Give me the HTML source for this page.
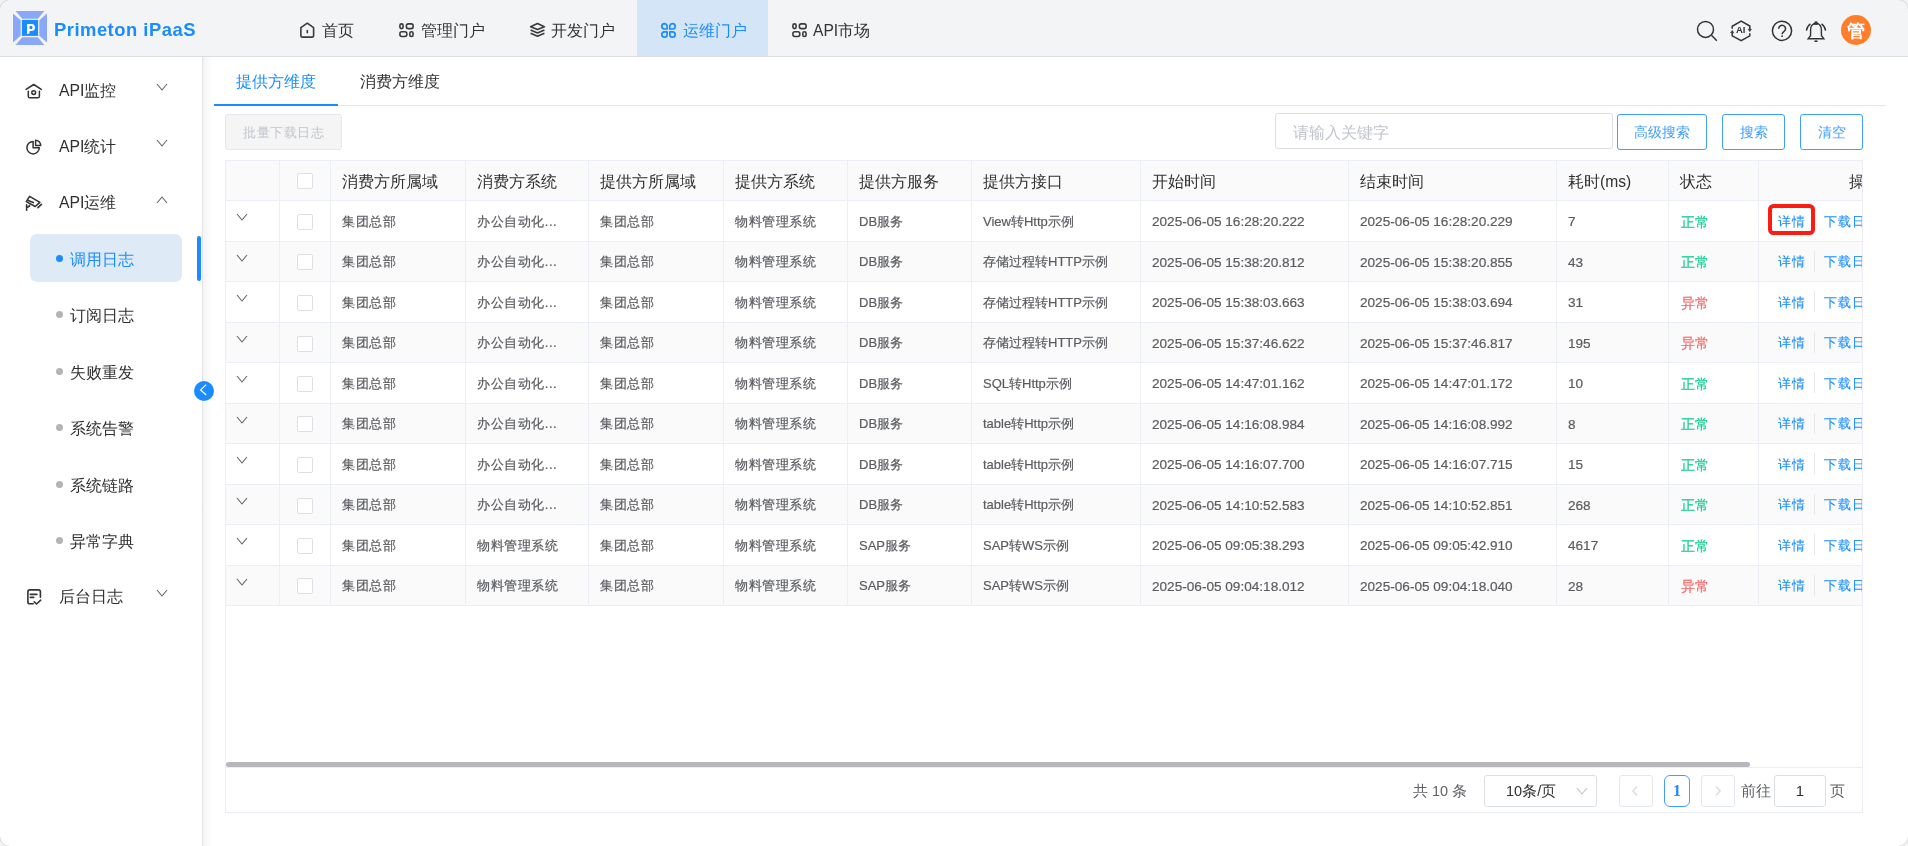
<!DOCTYPE html><html><head><meta charset="utf-8"><style>
*{box-sizing:border-box;margin:0;padding:0}
html,body{width:1908px;height:846px;overflow:hidden;background:#fff;font-family:"Liberation Sans",sans-serif;}
.a{position:absolute;white-space:nowrap}
#hdr{position:absolute;left:0;top:0;width:1908px;height:57px;background:#f3f4f6;border-bottom:1px solid #dcdde0;}
.brand{left:54px;top:17px;font-size:18.4px;font-weight:bold;color:#1a8cff;letter-spacing:0.5px;line-height:26px}
.nv{font-size:15.6px;color:#333;line-height:20px;top:21px}
.ic{position:absolute}
#side{position:absolute;left:0;top:57px;width:203px;height:789px;background:#fff;border-right:1px solid #e3e3e3}
.mt{font-size:15.8px;color:#303133;line-height:20px;margin-top:0.7px}
.st{font-size:15.8px;color:#303133;line-height:20px;margin-top:1.5px}
.dot{position:absolute;width:7px;height:7px;border-radius:50%;background:#b4b4b4}
.cell{font-size:13.6px;color:#5a5c60;line-height:18px;-webkit-text-stroke:0.2px}
.hc{font-size:15.6px;color:#303133;line-height:20px}
.cb{position:absolute;width:16px;height:16px;border:1px solid #dcdfe6;border-radius:2px;background:#fff}
.vl{position:absolute;width:1px;background:#ebeef5}
.hl{position:absolute;height:1px;background:#ebeef5}
.btn{position:absolute;height:36px;border:1px solid #409eff;border-radius:3px;background:#fff;color:#409eff;font-size:13.5px;line-height:36px;text-align:center}
</style></head><body><div id="root" style="position:absolute;left:0;top:0;width:1908px;height:846px;will-change:transform"><div id="hdr">
<svg class="ic" style="left:13px;top:11px" width="34" height="34" viewBox="0 0 34 34">
<defs><clipPath id="lc"><rect x="0" y="0" width="34" height="34" rx="3.5"/></clipPath></defs><g clip-path="url(#lc)">
<path d="M2.6 0H31.4L24.8 7.7H9.2Z" fill="#8aa8f7"/>
<path d="M2.6 34H31.4L24.8 26.3H9.2Z" fill="#8aa8f7"/>
<path d="M0 2.6V31.4L7.7 24.8V9.2Z" fill="#8aa8f7"/>
<path d="M34 2.6V31.4L26.3 24.8V9.2Z" fill="#8aa8f7"/></g>
<rect x="8.9" y="8.9" width="16.2" height="16" fill="#1a8cff"/>
<path d="M14 12.9H18.6C20.9 12.9 22 14.5 22 16.4C22 18.4 20.9 20 18.6 20H16.6V22.3L14 23.2Z M16.6 15V18H18.3C19.2 18 19.5 17.3 19.5 16.5C19.5 15.7 19.2 15 18.3 15Z" fill="#fff" fill-rule="evenodd"/>
</svg>
<div class="a brand">Primeton iPaaS</div>
<div class="a" style="left:637px;top:0;width:131px;height:56px;background:#d5e5f8"></div>
<svg class="ic" style="left:294px;top:18px" width="24" height="24" viewBox="0 0 24 24" fill="none" stroke="#3a3a3a" stroke-width="1.6" stroke-linejoin="round" stroke-linecap="round">
<path d="M6.9 9.6L13.3 5.2L19.6 9.6V17.4Q19.6 19.1 17.9 19.1H8.6Q6.9 19.1 6.9 17.4Z"/><path d="M13.3 12.6V14.8"/></svg>
<div class="a nv" style="left:322px">首页</div>
<svg class="ic" style="left:394px;top:18px" width="24" height="24" viewBox="0 0 24 24" fill="none" stroke="#3a3a3a" stroke-width="1.6">
<rect x="5.9" y="5.9" width="3.2" height="4.7" rx="1.6"/><rect x="12.4" y="5.9" width="6.7" height="4.7" rx="1.9"/><rect x="5.9" y="13.8" width="6.9" height="4.7" rx="1.9"/><rect x="15.8" y="13.8" width="3.3" height="4.7" rx="1.6"/></svg>
<div class="a nv" style="left:421px">管理门户</div>
<svg class="ic" style="left:525px;top:18px" width="24" height="24" viewBox="0 0 24 24" fill="none" stroke="#3a3a3a" stroke-width="1.6" stroke-linejoin="round">
<path d="M12.5 5.6L19.4 8.7L12.5 11.6L5.6 8.7Z"/><path d="M5.6 12L12.5 15L19.4 12"/><path d="M5.6 15.3L12.5 18.3L19.4 15.3"/></svg>
<div class="a nv" style="left:551px">开发门户</div>
<svg class="ic" style="left:656px;top:18px" width="24" height="24" viewBox="0 0 24 24" fill="none" stroke="#1a8cff" stroke-width="1.7" stroke-linejoin="round">
<path d="M11.1 11H8.4A2.7 2.7 0 0 1 5.8 8.3A2.7 2.7 0 0 1 8.4 5.6A2.7 2.7 0 0 1 11.1 8.3Z"/>
<path d="M13.8 11V8.3A2.7 2.7 0 0 1 16.5 5.6A2.7 2.7 0 0 1 19.2 8.3A2.7 2.7 0 0 1 16.5 11Z"/>
<path d="M11.1 13.8V16.5A2.7 2.7 0 0 1 8.4 19.2A2.7 2.7 0 0 1 5.8 16.5A2.7 2.7 0 0 1 8.4 13.8Z"/>
<path d="M13.8 13.8H16.5A2.7 2.7 0 0 1 19.2 16.5A2.7 2.7 0 0 1 16.5 19.2A2.7 2.7 0 0 1 13.8 16.5Z"/></svg>
<div class="a nv" style="left:683px;color:#1a8cff">运维门户</div>
<svg class="ic" style="left:787px;top:18px" width="24" height="24" viewBox="0 0 24 24" fill="none" stroke="#3a3a3a" stroke-width="1.6">
<rect x="5.9" y="5.9" width="3.2" height="4.7" rx="1.6"/><rect x="12.4" y="5.9" width="6.7" height="4.7" rx="1.9"/><rect x="5.9" y="13.8" width="6.9" height="4.7" rx="1.9"/><rect x="15.8" y="13.8" width="3.3" height="4.7" rx="1.6"/></svg>
<div class="a nv" style="left:813px">API市场</div>
<svg class="ic" style="left:1690px;top:12px" width="190" height="36" viewBox="0 0 190 36" fill="none" stroke="#333" stroke-width="1.5">
<circle cx="15.5" cy="17.4" r="8"/><path d="M21.5 23.3L26.8 28.7"/>
<path d="M42.2 16.8V14.3L51.2 9.2L59.8 14V17.6M59.8 21.2V23.8L51.2 28.7L42.2 23.8V20.4"/><path d="M58.2 17.2H61.4L59.8 19.6Z M40.6 20.8H43.8L42.2 18.4Z" fill="#333" stroke-width="0.6"/>
<circle cx="92" cy="18.8" r="9.6"/><path d="M88.7 16.8A3.4 3.4 0 1 1 94.1 19.4C92.8 20.3 92.1 20.9 92.1 22.2" stroke-width="1.5"/><circle cx="92.1" cy="24.2" r="0.9" fill="#333" stroke="none"/>
</svg>
<div class="a" style="left:1736px;top:24px;font-size:9.5px;font-weight:bold;color:#333;line-height:12px">AI</div>
<svg class="ic" style="left:1804px;top:20px" width="24" height="24" viewBox="0 0 24 24" fill="none" stroke="#333" stroke-width="1.4">
<path d="M12 3.5C8 3.5 6.6 6.5 6.6 10V15.5L4.2 18.7H19.8L17.4 15.5V10C17.4 6.5 16 3.5 12 3.5Z"/>
<circle cx="12" cy="3.2" r="1.2"/><path d="M10.5 21.2H13.5" stroke-width="1.6"/>
<path d="M6.4 3.9A10 10 0 0 0 2.4 10.6M17.6 3.9A10 10 0 0 1 21.6 10.6"/>
</svg>
<div class="a" style="left:1841px;top:15px;width:30px;height:30px;border-radius:50%;background:#ff7d2b;color:#fff;font-size:18px;font-weight:bold;line-height:32px;text-align:center">管</div>
</div>
<div id="side">
</div>
<div class="a" style="left:203px;top:57px;width:9px;height:789px;background:linear-gradient(to right,#f3f3f3,#fff)"></div>
<svg class="ic" style="left:20px;top:78px" width="28" height="28" viewBox="0 0 28 28" fill="none" stroke="#333" stroke-width="1.5" stroke-linejoin="round" stroke-linecap="round"><path d="M6.1 11.4L13.7 6.5L21.3 11.4"/><path d="M8.3 13.2V18.2Q8.3 19.8 9.9 19.8H17.8Q19.4 19.8 19.4 18.2V13.2"/><circle cx="13.7" cy="14.6" r="1.9"/></svg>
<div class="a mt" style="left:59px;top:80px">API监控</div>
<svg class="ic" style="left:156px;top:83px" width="12" height="8" viewBox="0 0 12 8" fill="none" stroke="#606266" stroke-width="1.1"><path d="M1 1L6.0 7L11 1"/></svg>
<svg class="ic" style="left:20px;top:134px" width="28" height="28" viewBox="0 0 28 28" fill="none" stroke="#333" stroke-width="1.5" stroke-linejoin="round"><path d="M13.1 7.5V13.7H19.3A6.2 6.2 0 1 1 13.1 7.5Z"/><path d="M15.6 6.3V11.4H20.7A5.1 5.1 0 0 0 15.6 6.3Z"/></svg>
<div class="a mt" style="left:59px;top:136px">API统计</div>
<svg class="ic" style="left:156px;top:139px" width="12" height="8" viewBox="0 0 12 8" fill="none" stroke="#606266" stroke-width="1.1"><path d="M1 1L6.0 7L11 1"/></svg>
<svg class="ic" style="left:20px;top:189px" width="28" height="28" viewBox="0 0 28 28" fill="none" stroke="#333" stroke-width="1.6" stroke-linejoin="round" stroke-linecap="round"><path d="M9.6 7.4L19.9 13.4L15.2 17.5L6.3 12.6Z"/><path d="M8.2 11.6L13.3 13.6"/><path d="M17.9 18.7L21.5 15.4"/><path d="M6.6 15.9V21.2M6.6 18.5L9.4 17.2V16.2"/></svg>
<div class="a mt" style="left:59px;top:192px">API运维</div>
<svg class="ic" style="left:156px;top:196px" width="12" height="8" viewBox="0 0 12 8" fill="none" stroke="#606266" stroke-width="1.1"><path d="M1 7L6.0 1L11 7"/></svg>
<div class="a" style="left:30px;top:234px;width:152px;height:48px;border-radius:7px;background:#dfeaf7"></div>
<div class="a" style="left:197px;top:236px;width:4px;height:45px;border-radius:2px;background:#1a8cff"></div>
<div class="dot" style="left:56px;top:255.0px;background:#1a8cff"></div>
<div class="a st" style="left:70px;top:248.5px;color:#1a8cff">调用日志</div>
<div class="dot" style="left:56px;top:311.4px;background:#b4b4b4"></div>
<div class="a st" style="left:70px;top:304.9px;color:#303133">订阅日志</div>
<div class="dot" style="left:56px;top:367.8px;background:#b4b4b4"></div>
<div class="a st" style="left:70px;top:361.3px;color:#303133">失败重发</div>
<div class="dot" style="left:56px;top:424.2px;background:#b4b4b4"></div>
<div class="a st" style="left:70px;top:417.7px;color:#303133">系统告警</div>
<div class="dot" style="left:56px;top:480.6px;background:#b4b4b4"></div>
<div class="a st" style="left:70px;top:474.1px;color:#303133">系统链路</div>
<div class="dot" style="left:56px;top:537.0px;background:#b4b4b4"></div>
<div class="a st" style="left:70px;top:530.5px;color:#303133">异常字典</div>
<svg class="ic" style="left:20px;top:582px" width="28" height="28" viewBox="0 0 28 28" fill="none" stroke="#333" stroke-width="1.6" stroke-linejoin="round" stroke-linecap="round"><path d="M20.4 15.2V9.8Q20.4 7.9 18.5 7.9H9.8Q7.9 7.9 7.9 9.8V19.9Q7.9 21.8 9.8 21.8H13.2"/><path d="M10.3 12.4H16.9M10.3 15.4H13.7"/><path d="M14.2 19.9L16.6 22L20.7 18.2"/></svg>
<div class="a mt" style="left:59px;top:586px">后台日志</div>
<svg class="ic" style="left:156px;top:589px" width="12" height="8" viewBox="0 0 12 8" fill="none" stroke="#606266" stroke-width="1.1"><path d="M1 1L6.0 7L11 1"/></svg>
<div class="a" style="left:194px;top:381px;width:20px;height:20px;border-radius:50%;background:#1a8cff"></div>
<svg class="ic" style="left:194px;top:381px" width="20" height="20" viewBox="0 0 20 20" fill="none" stroke="#fff" stroke-width="1.3"><path d="M12.2 3.6L6.7 8.9L12.2 14"/></svg>
<div class="a" style="left:236px;top:72px;font-size:16px;line-height:20px;color:#1a8cff">提供方维度</div>
<div class="a" style="left:360px;top:72px;font-size:16px;line-height:20px;color:#303133">消费方维度</div>
<div class="a" style="left:214px;top:105px;width:1672px;height:1px;background:#e4e7ed"></div>
<div class="a" style="left:214px;top:104px;width:124px;height:2px;background:#1a8cff"></div>
<div class="a" style="left:225px;top:114px;width:117px;height:36px;border:1px solid #e4e7ed;border-radius:3px;background:#f5f5f6;color:#c0c4cc;font-size:13.3px;line-height:35px;letter-spacing:0.5px;text-indent:0.5px;text-align:center">批量下载日志</div>
<div class="a" style="left:1275px;top:113px;width:338px;height:36px;border:1px solid #dcdfe6;border-radius:3px;background:#fff;color:#c0c4cc;font-size:15.8px;line-height:37px;padding-left:17px">请输入关键字</div>
<div class="btn" style="left:1617px;top:114px;width:90px">高级搜索</div>
<div class="btn" style="left:1722px;top:114px;width:63px">搜索</div>
<div class="btn" style="left:1800px;top:114px;width:63px">清空</div>
<div class="a" style="left:225px;top:160px;width:1637px;height:41px;background:#fafafa"></div>
<div class="a" style="left:225px;top:241px;width:1637px;height:40px;background:#fafafa"></div>
<div class="a" style="left:225px;top:322px;width:1637px;height:40px;background:#fafafa"></div>
<div class="a" style="left:225px;top:403px;width:1637px;height:40px;background:#fafafa"></div>
<div class="a" style="left:225px;top:484px;width:1637px;height:40px;background:#fafafa"></div>
<div class="a" style="left:225px;top:565px;width:1637px;height:40px;background:#fafafa"></div>
<div class="hl" style="left:225px;top:160px;width:1637px"></div>
<div class="hl" style="left:225px;top:200px;width:1637px"></div>
<div class="hl" style="left:225px;top:241px;width:1637px"></div>
<div class="hl" style="left:225px;top:281px;width:1637px"></div>
<div class="hl" style="left:225px;top:322px;width:1637px"></div>
<div class="hl" style="left:225px;top:362px;width:1637px"></div>
<div class="hl" style="left:225px;top:403px;width:1637px"></div>
<div class="hl" style="left:225px;top:443px;width:1637px"></div>
<div class="hl" style="left:225px;top:484px;width:1637px"></div>
<div class="hl" style="left:225px;top:524px;width:1637px"></div>
<div class="hl" style="left:225px;top:565px;width:1637px"></div>
<div class="hl" style="left:225px;top:605px;width:1637px"></div>
<div class="vl" style="left:225px;top:160px;height:445px"></div>
<div class="vl" style="left:279px;top:160px;height:445px"></div>
<div class="vl" style="left:330px;top:160px;height:445px"></div>
<div class="vl" style="left:465px;top:160px;height:445px"></div>
<div class="vl" style="left:588px;top:160px;height:445px"></div>
<div class="vl" style="left:723px;top:160px;height:445px"></div>
<div class="vl" style="left:847px;top:160px;height:445px"></div>
<div class="vl" style="left:971px;top:160px;height:445px"></div>
<div class="vl" style="left:1140px;top:160px;height:445px"></div>
<div class="vl" style="left:1348px;top:160px;height:445px"></div>
<div class="vl" style="left:1556px;top:160px;height:445px"></div>
<div class="vl" style="left:1668px;top:160px;height:445px"></div>
<div class="vl" style="left:1758px;top:160px;height:445px"></div>
<div class="vl" style="left:225px;top:605px;height:208px"></div>
<div class="vl" style="left:1862px;top:160px;height:653px"></div>
<div class="a hc" style="left:342px;top:172px">消费方所属域</div>
<div class="a hc" style="left:477px;top:172px">消费方系统</div>
<div class="a hc" style="left:600px;top:172px">提供方所属域</div>
<div class="a hc" style="left:735px;top:172px">提供方系统</div>
<div class="a hc" style="left:859px;top:172px">提供方服务</div>
<div class="a hc" style="left:983px;top:172px">提供方接口</div>
<div class="a hc" style="left:1152px;top:172px">开始时间</div>
<div class="a hc" style="left:1360px;top:172px">结束时间</div>
<div class="a hc" style="left:1568px;top:172px">耗时(ms)</div>
<div class="a hc" style="left:1680px;top:172px">状态</div>
<div class="a hc" style="left:1849px;top:172px;width:13px;overflow:hidden">操作</div>
<div class="cb" style="left:297px;top:173px"></div>
<svg class="ic" style="left:236px;top:213px" width="12" height="8" viewBox="0 0 12 8" fill="none" stroke="#606266" stroke-width="1.1"><path d="M1 1L6.0 7L11 1"/></svg>
<div class="cb" style="left:297px;top:214px"></div>
<div class="a cell" style="left:342px;top:212.5px;color:#5a5c60;font-size:13px;letter-spacing:0.55px">集团总部</div>
<div class="a cell" style="left:477px;top:212.5px;color:#5a5c60;font-size:13px;letter-spacing:0.55px">办公自动化...</div>
<div class="a cell" style="left:600px;top:212.5px;color:#5a5c60;font-size:13px;letter-spacing:0.55px">集团总部</div>
<div class="a cell" style="left:735px;top:212.5px;color:#5a5c60;font-size:13px;letter-spacing:0.55px">物料管理系统</div>
<div class="a cell" style="left:859px;top:212.5px;color:#5a5c60;font-size:13px;letter-spacing:0px">DB服务</div>
<div class="a cell" style="left:983px;top:212.5px;color:#5a5c60;font-size:13px;letter-spacing:0px">View转Http示例</div>
<div class="a cell" style="left:1152px;top:213.0px;color:#5a5c60;font-size:13.6px">2025-06-05 16:28:20.222</div>
<div class="a cell" style="left:1360px;top:213.0px;color:#5a5c60;font-size:13.6px">2025-06-05 16:28:20.229</div>
<div class="a cell" style="left:1568px;top:213.0px;color:#5a5c60;font-size:13.6px">7</div>
<div class="a cell" style="left:1681px;top:212.5px;color:#16cc93;font-size:14px;letter-spacing:0px">正常</div>
<div class="a cell" style="left:1778px;top:212.5px;color:#1a8cff;font-size:13px;letter-spacing:1px;-webkit-text-stroke:0.1px">详情</div>
<div class="a cell" style="left:1824px;top:212.5px;width:38px;overflow:hidden;color:#1a8cff;font-size:13px;letter-spacing:1px;-webkit-text-stroke:0.1px">下载日志</div>
<svg class="ic" style="left:236px;top:254px" width="12" height="8" viewBox="0 0 12 8" fill="none" stroke="#606266" stroke-width="1.1"><path d="M1 1L6.0 7L11 1"/></svg>
<div class="cb" style="left:297px;top:254px"></div>
<div class="a cell" style="left:342px;top:253.0px;color:#5a5c60;font-size:13px;letter-spacing:0.55px">集团总部</div>
<div class="a cell" style="left:477px;top:253.0px;color:#5a5c60;font-size:13px;letter-spacing:0.55px">办公自动化...</div>
<div class="a cell" style="left:600px;top:253.0px;color:#5a5c60;font-size:13px;letter-spacing:0.55px">集团总部</div>
<div class="a cell" style="left:735px;top:253.0px;color:#5a5c60;font-size:13px;letter-spacing:0.55px">物料管理系统</div>
<div class="a cell" style="left:859px;top:253.0px;color:#5a5c60;font-size:13px;letter-spacing:0px">DB服务</div>
<div class="a cell" style="left:983px;top:253.0px;color:#5a5c60;font-size:13px;letter-spacing:0px">存储过程转HTTP示例</div>
<div class="a cell" style="left:1152px;top:253.5px;color:#5a5c60;font-size:13.6px">2025-06-05 15:38:20.812</div>
<div class="a cell" style="left:1360px;top:253.5px;color:#5a5c60;font-size:13.6px">2025-06-05 15:38:20.855</div>
<div class="a cell" style="left:1568px;top:253.5px;color:#5a5c60;font-size:13.6px">43</div>
<div class="a cell" style="left:1681px;top:253.0px;color:#16cc93;font-size:14px;letter-spacing:0px">正常</div>
<div class="a cell" style="left:1778px;top:253.0px;color:#1a8cff;font-size:13px;letter-spacing:1px;-webkit-text-stroke:0.1px">详情</div>
<div class="a cell" style="left:1824px;top:253.0px;width:38px;overflow:hidden;color:#1a8cff;font-size:13px;letter-spacing:1px;-webkit-text-stroke:0.1px">下载日志</div>
<div class="a" style="left:1814px;top:250.5px;width:1px;height:21px;background:#e6e8ec"></div>
<svg class="ic" style="left:236px;top:294px" width="12" height="8" viewBox="0 0 12 8" fill="none" stroke="#606266" stroke-width="1.1"><path d="M1 1L6.0 7L11 1"/></svg>
<div class="cb" style="left:297px;top:295px"></div>
<div class="a cell" style="left:342px;top:293.5px;color:#5a5c60;font-size:13px;letter-spacing:0.55px">集团总部</div>
<div class="a cell" style="left:477px;top:293.5px;color:#5a5c60;font-size:13px;letter-spacing:0.55px">办公自动化...</div>
<div class="a cell" style="left:600px;top:293.5px;color:#5a5c60;font-size:13px;letter-spacing:0.55px">集团总部</div>
<div class="a cell" style="left:735px;top:293.5px;color:#5a5c60;font-size:13px;letter-spacing:0.55px">物料管理系统</div>
<div class="a cell" style="left:859px;top:293.5px;color:#5a5c60;font-size:13px;letter-spacing:0px">DB服务</div>
<div class="a cell" style="left:983px;top:293.5px;color:#5a5c60;font-size:13px;letter-spacing:0px">存储过程转HTTP示例</div>
<div class="a cell" style="left:1152px;top:294.0px;color:#5a5c60;font-size:13.6px">2025-06-05 15:38:03.663</div>
<div class="a cell" style="left:1360px;top:294.0px;color:#5a5c60;font-size:13.6px">2025-06-05 15:38:03.694</div>
<div class="a cell" style="left:1568px;top:294.0px;color:#5a5c60;font-size:13.6px">31</div>
<div class="a cell" style="left:1681px;top:293.5px;color:#f66868;font-size:14px;letter-spacing:0px">异常</div>
<div class="a cell" style="left:1778px;top:293.5px;color:#1a8cff;font-size:13px;letter-spacing:1px;-webkit-text-stroke:0.1px">详情</div>
<div class="a cell" style="left:1824px;top:293.5px;width:38px;overflow:hidden;color:#1a8cff;font-size:13px;letter-spacing:1px;-webkit-text-stroke:0.1px">下载日志</div>
<div class="a" style="left:1814px;top:291.0px;width:1px;height:21px;background:#e6e8ec"></div>
<svg class="ic" style="left:236px;top:335px" width="12" height="8" viewBox="0 0 12 8" fill="none" stroke="#606266" stroke-width="1.1"><path d="M1 1L6.0 7L11 1"/></svg>
<div class="cb" style="left:297px;top:336px"></div>
<div class="a cell" style="left:342px;top:334.0px;color:#5a5c60;font-size:13px;letter-spacing:0.55px">集团总部</div>
<div class="a cell" style="left:477px;top:334.0px;color:#5a5c60;font-size:13px;letter-spacing:0.55px">办公自动化...</div>
<div class="a cell" style="left:600px;top:334.0px;color:#5a5c60;font-size:13px;letter-spacing:0.55px">集团总部</div>
<div class="a cell" style="left:735px;top:334.0px;color:#5a5c60;font-size:13px;letter-spacing:0.55px">物料管理系统</div>
<div class="a cell" style="left:859px;top:334.0px;color:#5a5c60;font-size:13px;letter-spacing:0px">DB服务</div>
<div class="a cell" style="left:983px;top:334.0px;color:#5a5c60;font-size:13px;letter-spacing:0px">存储过程转HTTP示例</div>
<div class="a cell" style="left:1152px;top:334.5px;color:#5a5c60;font-size:13.6px">2025-06-05 15:37:46.622</div>
<div class="a cell" style="left:1360px;top:334.5px;color:#5a5c60;font-size:13.6px">2025-06-05 15:37:46.817</div>
<div class="a cell" style="left:1568px;top:334.5px;color:#5a5c60;font-size:13.6px">195</div>
<div class="a cell" style="left:1681px;top:334.0px;color:#f66868;font-size:14px;letter-spacing:0px">异常</div>
<div class="a cell" style="left:1778px;top:334.0px;color:#1a8cff;font-size:13px;letter-spacing:1px;-webkit-text-stroke:0.1px">详情</div>
<div class="a cell" style="left:1824px;top:334.0px;width:38px;overflow:hidden;color:#1a8cff;font-size:13px;letter-spacing:1px;-webkit-text-stroke:0.1px">下载日志</div>
<div class="a" style="left:1814px;top:331.5px;width:1px;height:21px;background:#e6e8ec"></div>
<svg class="ic" style="left:236px;top:375px" width="12" height="8" viewBox="0 0 12 8" fill="none" stroke="#606266" stroke-width="1.1"><path d="M1 1L6.0 7L11 1"/></svg>
<div class="cb" style="left:297px;top:376px"></div>
<div class="a cell" style="left:342px;top:374.5px;color:#5a5c60;font-size:13px;letter-spacing:0.55px">集团总部</div>
<div class="a cell" style="left:477px;top:374.5px;color:#5a5c60;font-size:13px;letter-spacing:0.55px">办公自动化...</div>
<div class="a cell" style="left:600px;top:374.5px;color:#5a5c60;font-size:13px;letter-spacing:0.55px">集团总部</div>
<div class="a cell" style="left:735px;top:374.5px;color:#5a5c60;font-size:13px;letter-spacing:0.55px">物料管理系统</div>
<div class="a cell" style="left:859px;top:374.5px;color:#5a5c60;font-size:13px;letter-spacing:0px">DB服务</div>
<div class="a cell" style="left:983px;top:374.5px;color:#5a5c60;font-size:13px;letter-spacing:0px">SQL转Http示例</div>
<div class="a cell" style="left:1152px;top:375.0px;color:#5a5c60;font-size:13.6px">2025-06-05 14:47:01.162</div>
<div class="a cell" style="left:1360px;top:375.0px;color:#5a5c60;font-size:13.6px">2025-06-05 14:47:01.172</div>
<div class="a cell" style="left:1568px;top:375.0px;color:#5a5c60;font-size:13.6px">10</div>
<div class="a cell" style="left:1681px;top:374.5px;color:#16cc93;font-size:14px;letter-spacing:0px">正常</div>
<div class="a cell" style="left:1778px;top:374.5px;color:#1a8cff;font-size:13px;letter-spacing:1px;-webkit-text-stroke:0.1px">详情</div>
<div class="a cell" style="left:1824px;top:374.5px;width:38px;overflow:hidden;color:#1a8cff;font-size:13px;letter-spacing:1px;-webkit-text-stroke:0.1px">下载日志</div>
<div class="a" style="left:1814px;top:372.0px;width:1px;height:21px;background:#e6e8ec"></div>
<svg class="ic" style="left:236px;top:416px" width="12" height="8" viewBox="0 0 12 8" fill="none" stroke="#606266" stroke-width="1.1"><path d="M1 1L6.0 7L11 1"/></svg>
<div class="cb" style="left:297px;top:416px"></div>
<div class="a cell" style="left:342px;top:415.0px;color:#5a5c60;font-size:13px;letter-spacing:0.55px">集团总部</div>
<div class="a cell" style="left:477px;top:415.0px;color:#5a5c60;font-size:13px;letter-spacing:0.55px">办公自动化...</div>
<div class="a cell" style="left:600px;top:415.0px;color:#5a5c60;font-size:13px;letter-spacing:0.55px">集团总部</div>
<div class="a cell" style="left:735px;top:415.0px;color:#5a5c60;font-size:13px;letter-spacing:0.55px">物料管理系统</div>
<div class="a cell" style="left:859px;top:415.0px;color:#5a5c60;font-size:13px;letter-spacing:0px">DB服务</div>
<div class="a cell" style="left:983px;top:415.0px;color:#5a5c60;font-size:13px;letter-spacing:0px">table转Http示例</div>
<div class="a cell" style="left:1152px;top:415.5px;color:#5a5c60;font-size:13.6px">2025-06-05 14:16:08.984</div>
<div class="a cell" style="left:1360px;top:415.5px;color:#5a5c60;font-size:13.6px">2025-06-05 14:16:08.992</div>
<div class="a cell" style="left:1568px;top:415.5px;color:#5a5c60;font-size:13.6px">8</div>
<div class="a cell" style="left:1681px;top:415.0px;color:#16cc93;font-size:14px;letter-spacing:0px">正常</div>
<div class="a cell" style="left:1778px;top:415.0px;color:#1a8cff;font-size:13px;letter-spacing:1px;-webkit-text-stroke:0.1px">详情</div>
<div class="a cell" style="left:1824px;top:415.0px;width:38px;overflow:hidden;color:#1a8cff;font-size:13px;letter-spacing:1px;-webkit-text-stroke:0.1px">下载日志</div>
<div class="a" style="left:1814px;top:412.5px;width:1px;height:21px;background:#e6e8ec"></div>
<svg class="ic" style="left:236px;top:456px" width="12" height="8" viewBox="0 0 12 8" fill="none" stroke="#606266" stroke-width="1.1"><path d="M1 1L6.0 7L11 1"/></svg>
<div class="cb" style="left:297px;top:457px"></div>
<div class="a cell" style="left:342px;top:455.5px;color:#5a5c60;font-size:13px;letter-spacing:0.55px">集团总部</div>
<div class="a cell" style="left:477px;top:455.5px;color:#5a5c60;font-size:13px;letter-spacing:0.55px">办公自动化...</div>
<div class="a cell" style="left:600px;top:455.5px;color:#5a5c60;font-size:13px;letter-spacing:0.55px">集团总部</div>
<div class="a cell" style="left:735px;top:455.5px;color:#5a5c60;font-size:13px;letter-spacing:0.55px">物料管理系统</div>
<div class="a cell" style="left:859px;top:455.5px;color:#5a5c60;font-size:13px;letter-spacing:0px">DB服务</div>
<div class="a cell" style="left:983px;top:455.5px;color:#5a5c60;font-size:13px;letter-spacing:0px">table转Http示例</div>
<div class="a cell" style="left:1152px;top:456.0px;color:#5a5c60;font-size:13.6px">2025-06-05 14:16:07.700</div>
<div class="a cell" style="left:1360px;top:456.0px;color:#5a5c60;font-size:13.6px">2025-06-05 14:16:07.715</div>
<div class="a cell" style="left:1568px;top:456.0px;color:#5a5c60;font-size:13.6px">15</div>
<div class="a cell" style="left:1681px;top:455.5px;color:#16cc93;font-size:14px;letter-spacing:0px">正常</div>
<div class="a cell" style="left:1778px;top:455.5px;color:#1a8cff;font-size:13px;letter-spacing:1px;-webkit-text-stroke:0.1px">详情</div>
<div class="a cell" style="left:1824px;top:455.5px;width:38px;overflow:hidden;color:#1a8cff;font-size:13px;letter-spacing:1px;-webkit-text-stroke:0.1px">下载日志</div>
<div class="a" style="left:1814px;top:453.0px;width:1px;height:21px;background:#e6e8ec"></div>
<svg class="ic" style="left:236px;top:497px" width="12" height="8" viewBox="0 0 12 8" fill="none" stroke="#606266" stroke-width="1.1"><path d="M1 1L6.0 7L11 1"/></svg>
<div class="cb" style="left:297px;top:498px"></div>
<div class="a cell" style="left:342px;top:496.0px;color:#5a5c60;font-size:13px;letter-spacing:0.55px">集团总部</div>
<div class="a cell" style="left:477px;top:496.0px;color:#5a5c60;font-size:13px;letter-spacing:0.55px">办公自动化...</div>
<div class="a cell" style="left:600px;top:496.0px;color:#5a5c60;font-size:13px;letter-spacing:0.55px">集团总部</div>
<div class="a cell" style="left:735px;top:496.0px;color:#5a5c60;font-size:13px;letter-spacing:0.55px">物料管理系统</div>
<div class="a cell" style="left:859px;top:496.0px;color:#5a5c60;font-size:13px;letter-spacing:0px">DB服务</div>
<div class="a cell" style="left:983px;top:496.0px;color:#5a5c60;font-size:13px;letter-spacing:0px">table转Http示例</div>
<div class="a cell" style="left:1152px;top:496.5px;color:#5a5c60;font-size:13.6px">2025-06-05 14:10:52.583</div>
<div class="a cell" style="left:1360px;top:496.5px;color:#5a5c60;font-size:13.6px">2025-06-05 14:10:52.851</div>
<div class="a cell" style="left:1568px;top:496.5px;color:#5a5c60;font-size:13.6px">268</div>
<div class="a cell" style="left:1681px;top:496.0px;color:#16cc93;font-size:14px;letter-spacing:0px">正常</div>
<div class="a cell" style="left:1778px;top:496.0px;color:#1a8cff;font-size:13px;letter-spacing:1px;-webkit-text-stroke:0.1px">详情</div>
<div class="a cell" style="left:1824px;top:496.0px;width:38px;overflow:hidden;color:#1a8cff;font-size:13px;letter-spacing:1px;-webkit-text-stroke:0.1px">下载日志</div>
<div class="a" style="left:1814px;top:493.5px;width:1px;height:21px;background:#e6e8ec"></div>
<svg class="ic" style="left:236px;top:537px" width="12" height="8" viewBox="0 0 12 8" fill="none" stroke="#606266" stroke-width="1.1"><path d="M1 1L6.0 7L11 1"/></svg>
<div class="cb" style="left:297px;top:538px"></div>
<div class="a cell" style="left:342px;top:536.5px;color:#5a5c60;font-size:13px;letter-spacing:0.55px">集团总部</div>
<div class="a cell" style="left:477px;top:536.5px;color:#5a5c60;font-size:13px;letter-spacing:0.55px">物料管理系统</div>
<div class="a cell" style="left:600px;top:536.5px;color:#5a5c60;font-size:13px;letter-spacing:0.55px">集团总部</div>
<div class="a cell" style="left:735px;top:536.5px;color:#5a5c60;font-size:13px;letter-spacing:0.55px">物料管理系统</div>
<div class="a cell" style="left:859px;top:536.5px;color:#5a5c60;font-size:13px;letter-spacing:0px">SAP服务</div>
<div class="a cell" style="left:983px;top:536.5px;color:#5a5c60;font-size:13px;letter-spacing:0px">SAP转WS示例</div>
<div class="a cell" style="left:1152px;top:537.0px;color:#5a5c60;font-size:13.6px">2025-06-05 09:05:38.293</div>
<div class="a cell" style="left:1360px;top:537.0px;color:#5a5c60;font-size:13.6px">2025-06-05 09:05:42.910</div>
<div class="a cell" style="left:1568px;top:537.0px;color:#5a5c60;font-size:13.6px">4617</div>
<div class="a cell" style="left:1681px;top:536.5px;color:#16cc93;font-size:14px;letter-spacing:0px">正常</div>
<div class="a cell" style="left:1778px;top:536.5px;color:#1a8cff;font-size:13px;letter-spacing:1px;-webkit-text-stroke:0.1px">详情</div>
<div class="a cell" style="left:1824px;top:536.5px;width:38px;overflow:hidden;color:#1a8cff;font-size:13px;letter-spacing:1px;-webkit-text-stroke:0.1px">下载日志</div>
<div class="a" style="left:1814px;top:534.0px;width:1px;height:21px;background:#e6e8ec"></div>
<svg class="ic" style="left:236px;top:578px" width="12" height="8" viewBox="0 0 12 8" fill="none" stroke="#606266" stroke-width="1.1"><path d="M1 1L6.0 7L11 1"/></svg>
<div class="cb" style="left:297px;top:578px"></div>
<div class="a cell" style="left:342px;top:577.0px;color:#5a5c60;font-size:13px;letter-spacing:0.55px">集团总部</div>
<div class="a cell" style="left:477px;top:577.0px;color:#5a5c60;font-size:13px;letter-spacing:0.55px">物料管理系统</div>
<div class="a cell" style="left:600px;top:577.0px;color:#5a5c60;font-size:13px;letter-spacing:0.55px">集团总部</div>
<div class="a cell" style="left:735px;top:577.0px;color:#5a5c60;font-size:13px;letter-spacing:0.55px">物料管理系统</div>
<div class="a cell" style="left:859px;top:577.0px;color:#5a5c60;font-size:13px;letter-spacing:0px">SAP服务</div>
<div class="a cell" style="left:983px;top:577.0px;color:#5a5c60;font-size:13px;letter-spacing:0px">SAP转WS示例</div>
<div class="a cell" style="left:1152px;top:577.5px;color:#5a5c60;font-size:13.6px">2025-06-05 09:04:18.012</div>
<div class="a cell" style="left:1360px;top:577.5px;color:#5a5c60;font-size:13.6px">2025-06-05 09:04:18.040</div>
<div class="a cell" style="left:1568px;top:577.5px;color:#5a5c60;font-size:13.6px">28</div>
<div class="a cell" style="left:1681px;top:577.0px;color:#f66868;font-size:14px;letter-spacing:0px">异常</div>
<div class="a cell" style="left:1778px;top:577.0px;color:#1a8cff;font-size:13px;letter-spacing:1px;-webkit-text-stroke:0.1px">详情</div>
<div class="a cell" style="left:1824px;top:577.0px;width:38px;overflow:hidden;color:#1a8cff;font-size:13px;letter-spacing:1px;-webkit-text-stroke:0.1px">下载日志</div>
<div class="a" style="left:1814px;top:574.5px;width:1px;height:21px;background:#e6e8ec"></div>
<div class="a" style="left:1767.5px;top:204px;width:47px;height:31px;border:4.8px solid #fc1d12;border-radius:5.5px"></div>
<div class="a" style="left:226px;top:762px;width:1524px;height:5px;border-radius:3px;background:#b5b7bc"></div>
<div class="hl" style="left:225px;top:767px;width:1637px"></div>
<div class="hl" style="left:225px;top:812px;width:1638px"></div>
<div class="a" style="left:1413px;top:781px;font-size:14.5px;line-height:20px;color:#606266">共 10 条</div>
<div class="a" style="left:1484px;top:775px;width:113px;height:32px;border:1px solid #dcdfe6;border-radius:3px"></div>
<div class="a" style="left:1506px;top:781px;font-size:14.5px;line-height:20px;color:#303133">10条/页</div>
<svg class="ic" style="left:1576px;top:787px" width="12" height="8" viewBox="0 0 12 8" fill="none" stroke="#c0c4cc" stroke-width="1.1"><path d="M1 1L6.0 7L11 1"/></svg>
<div class="a" style="left:1619px;top:775px;width:34px;height:32px;border:1px solid #e4e7ed;border-radius:3px"></div>
<svg class="ic" style="left:1629px;top:784px" width="12" height="14" viewBox="0 0 12 14" fill="none" stroke="#dde1e8" stroke-width="1.8"><path d="M8 2.5L4 7L8 11.5"/></svg>
<div class="a" style="left:1664px;top:775px;width:26px;height:32px;border:1.5px solid #409eff;border-radius:6px;color:#1a8cff;font-weight:bold;font-size:16px;line-height:30px;text-align:center;font-family:'Liberation Serif',serif">1</div>
<div class="a" style="left:1701px;top:775px;width:34px;height:32px;border:1px solid #e4e7ed;border-radius:3px"></div>
<svg class="ic" style="left:1712px;top:784px" width="12" height="14" viewBox="0 0 12 14" fill="none" stroke="#dde1e8" stroke-width="1.8"><path d="M4 2.5L8 7L4 11.5"/></svg>
<div class="a" style="left:1741px;top:781px;font-size:14.5px;line-height:20px;color:#606266">前往</div>
<div class="a" style="left:1774px;top:775px;width:52px;height:32px;border:1px solid #dcdfe6;border-radius:3px;text-align:center;font-size:15px;line-height:30px;color:#303133">1</div>
<div class="a" style="left:1830px;top:781px;font-size:14.5px;line-height:20px;color:#606266">页</div>
<div class="a" style="left:-1px;top:-1px;width:1910px;height:848px;border-radius:11px;border:1px solid #d6d6d6;box-shadow:0 0 0 30px #f2f3f5;pointer-events:none"></div></div></body></html>
